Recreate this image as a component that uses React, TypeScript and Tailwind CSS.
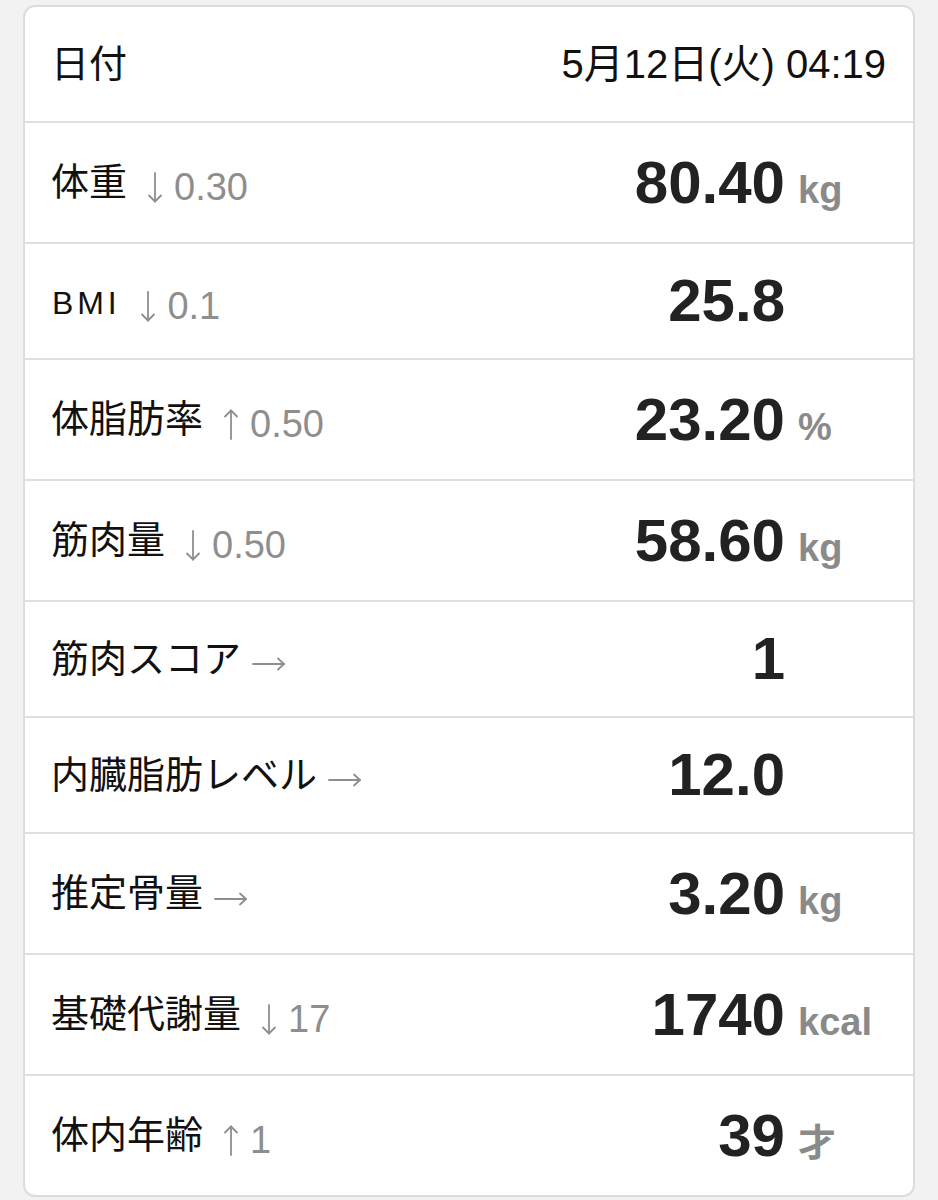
const jp = "font-['Liberation_Sans','Noto_Sans_CJK_JP',sans-serif]";

type Trend = "down" | "up" | "flat";

type Row = {
  label: string;
  trend: Trend;
  delta?: string;
  value: string;
  unit?: string;
  tall?: boolean;
};

const rows: Row[] = [
  { label: "体重", trend: "down", delta: "0.30", value: "80.40", unit: "kg", tall: true },
  { label: "BMI", trend: "down", delta: "0.1", value: "25.8" },
  { label: "体脂肪率", trend: "up", delta: "0.50", value: "23.20", unit: "%", tall: true },
  { label: "筋肉量", trend: "down", delta: "0.50", value: "58.60", unit: "kg", tall: true },
  { label: "筋肉スコア", trend: "flat", value: "1" },
  { label: "内臓脂肪レベル", trend: "flat", value: "12.0" },
  { label: "推定骨量", trend: "flat", value: "3.20", unit: "kg", tall: true },
  { label: "基礎代謝量", trend: "down", delta: "17", value: "1740", unit: "kcal", tall: true },
  { label: "体内年齢", trend: "up", delta: "1", value: "39", unit: "才", tall: true },
];

function Arrow({ trend }: { trend: Trend }) {
  if (trend === "flat") {
    return (
      <svg width="34" height="16" viewBox="0 0 34 16" className="ml-[11px] translate-y-[5px]" fill="none" stroke="#8e8e8e" strokeWidth="1.8" strokeLinecap="round" strokeLinejoin="round">
        <path d="M1 8H32" />
        <path d="M26 2.5L32 8L26 13.5" />
      </svg>
    );
  }
  return (
    <svg
      width="16"
      height="31"
      viewBox="0 0 16 31"
      className={`ml-[20px] translate-y-[5px] ${trend === "up" ? "rotate-180" : ""}`}
      fill="none"
      stroke="#8e8e8e"
      strokeWidth="1.8"
      strokeLinecap="round"
      strokeLinejoin="round"
    >
      <path d="M8 1V29.5" />
      <path d="M2 23.5L8 29.5L14 23.5" />
    </svg>
  );
}

function MetricRow({ row, last }: { row: Row; last: boolean }) {
  return (
    <div
      className={`flex items-center justify-between pl-[26px] pr-[27px] ${
        last ? "h-[119px]" : row.tall ? "h-[121px] border-b-2 border-[#e0e0e0]" : "h-[116px] border-b-2 border-[#e0e0e0]"
      }`}
    >
      <div className="flex items-center">
        <span
          className={
            row.label === "BMI"
              ? "ml-[1px] translate-y-[2px] text-[32px] tracking-[0.12em] text-[#111]"
              : "text-[38px] text-[#111]"
          }
        >
          {row.label}
        </span>
        <Arrow trend={row.trend} />
        {row.delta && (
          <span className="ml-[11px] translate-y-[5px] text-[38px] text-[#8e8e8e]">{row.delta}</span>
        )}
      </div>
      <div className="flex items-baseline">
        <span className="text-right text-[60px] font-bold leading-none text-[#222]">{row.value}</span>
        <span className="w-[101px] pl-[13px] text-[38px] font-bold leading-none text-[#8a8a8a]">
          {row.unit ?? ""}
        </span>
      </div>
    </div>
  );
}

export default function App() {
  return (
    <div className={`min-h-[1200px] bg-[#f2f2f2] px-[23px] pt-[5px] ${jp}`}>
      <div className="overflow-hidden rounded-[12px] border-2 border-[#dcdcdc] bg-white">
        <div className="flex h-[116px] items-center justify-between border-b-2 border-[#e0e0e0] pl-[26px] pr-[27px]">
          <span className="text-[38px] text-[#111]">日付</span>
          <span className="text-[40px] text-[#111]">5月12日(火) 04:19</span>
        </div>
        {rows.map((row, i) => (
          <MetricRow key={row.label} row={row} last={i === rows.length - 1} />
        ))}
      </div>
    </div>
  );
}
